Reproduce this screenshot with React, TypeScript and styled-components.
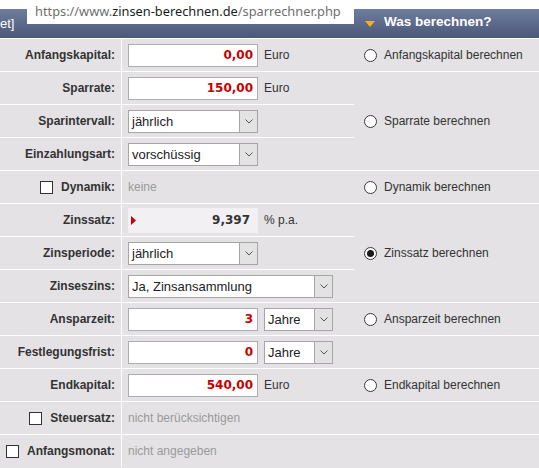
import React from "react";
import styled, { createGlobalStyle } from "styled-components";

const GlobalStyle = createGlobalStyle`
  html, body { margin: 0; padding: 0; }
  body {
    background: #e4e2e5;
    font-family: "Liberation Sans", Arial, sans-serif;
  }
`;

const Page = styled.div`
  position: relative;
  width: 539px;
`;

const TopStrip = styled.div`
  height: 9px;
  background: #fff;
`;

const Header = styled.div`
  display: grid;
  grid-template-columns: 354px 1fr;
  height: 29px;
  background: linear-gradient(#6f7d9d, #4a5779);
`;

const HeaderLeft = styled.div`
  display: flex;
  align-items: center;
  color: #fff;
  font-size: 13px;
  padding-bottom: 1px;
  overflow: hidden;
`;

const HeaderRight = styled.div`
  display: flex;
  align-items: center;
  gap: 9px;
  padding-left: 11px;
  padding-bottom: 4px;
  color: #fff;
  font-weight: bold;
  font-size: 13.5px;
`;

const Triangle = styled.svg`
  margin-top: 4px;
  flex: none;
`;

const UrlTip = styled.div`
  position: absolute;
  top: 0;
  left: 27px;
  width: 327px;
  height: 24px;
  box-sizing: border-box;
  padding-left: 8px;
  background: #fff;
  font-family: "Noto Sans", "Open Sans", sans-serif;
  font-size: 12.8px;
  line-height: 22px;
  color: #6f6f6f;
  white-space: nowrap;
  overflow: hidden;
`;

const Domain = styled.span`
  color: #1c1c1c;
`;

const Grid = styled.div`
  display: grid;
  grid-template-columns: 122px 232px 185px;
  grid-auto-rows: 33px;
`;

const LabelCell = styled.div`
  box-sizing: border-box;
  border-top: 1px solid #fff;
  border-right: 1px solid #fff;
  display: flex;
  justify-content: flex-end;
  align-items: center;
  gap: 8px;
  padding-right: 6px;
  font-weight: bold;
  font-size: 12px;
  color: #333;
  white-space: nowrap;
`;

const FieldCell = styled.div`
  box-sizing: border-box;
  border-top: 1px solid #fff;
  display: flex;
  align-items: center;
  gap: 6px;
  padding-left: 6px;
  font-size: 12px;
  color: #333;
  white-space: nowrap;
`;

const ChoiceCell = styled.div<{ $span?: number }>`
  box-sizing: border-box;
  border-top: 1px solid #fff;
  grid-row: span ${(p) => p.$span ?? 1};
  display: flex;
  align-items: center;
  gap: 7px;
  padding-left: 10px;
  font-size: 12px;
  color: #333;
  white-space: nowrap;
`;

const AmountInput = styled.input`
  width: 130px;
  height: 23px;
  box-sizing: border-box;
  margin: 0;
  border: 1px solid #abadb3;
  background: #fff;
  padding: 0 4px 0 0;
  text-align: right;
  font-family: "DejaVu Sans", Verdana, sans-serif;
  font-weight: bold;
  font-size: 12px;
  color: #c80000;
  outline: none;
`;

const SelectBox = styled.div<{ $w: number }>`
  width: ${(p) => p.$w}px;
  height: 23px;
  box-sizing: border-box;
  border: 1px solid #a6a6a6;
  background: #fff;
  display: flex;
`;

const SelectText = styled.div`
  flex: 1;
  display: flex;
  align-items: center;
  padding-left: 3px;
  font-size: 13px;
  color: #222;
`;

const SelectArrow = styled.div`
  width: 17px;
  flex: none;
  background: #e3e3e3;
  border-left: 1px solid #a6a6a6;
  display: flex;
  align-items: center;
  justify-content: center;
`;

const RateBox = styled.div`
  width: 130px;
  height: 25px;
  box-sizing: border-box;
  background: #f2f0f3;
  display: flex;
  align-items: center;
  justify-content: space-between;
  padding: 0 8px 0 3px;
`;

const RateValue = styled.span`
  font-family: "DejaVu Sans", Verdana, sans-serif;
  font-weight: bold;
  font-size: 12px;
  color: #333;
`;

const Checkbox = styled.span`
  width: 13px;
  height: 13px;
  box-sizing: border-box;
  border: 1px solid #333;
  background: #fff;
  flex: none;
`;

const Radio = styled.span<{ $checked?: boolean }>`
  width: 13px;
  height: 13px;
  box-sizing: border-box;
  border: 1px solid #3a3a3a;
  border-radius: 50%;
  background: #fff;
  flex: none;
  display: flex;
  align-items: center;
  justify-content: center;
  &::after {
    content: "";
    display: ${(p) => (p.$checked ? "block" : "none")};
    width: 7px;
    height: 7px;
    border-radius: 50%;
    background: #1a1a1a;
  }
`;

const Muted = styled.span`
  color: #9a9a9a;
`;

const Chevron = () => (
  <svg width="8" height="5" viewBox="0 0 8 5">
    <polyline points="0.5,0.5 4,4 7.5,0.5" fill="none" stroke="#555" strokeWidth="1" />
  </svg>
);

const Select = ({ w, value }: { w: number; value: string }) => (
  <SelectBox $w={w}>
    <SelectText>{value}</SelectText>
    <SelectArrow>
      <Chevron />
    </SelectArrow>
  </SelectBox>
);

const Choice = ({ label, checked, span }: { label?: string; checked?: boolean; span?: number }) => (
  <ChoiceCell $span={span}>
    {label && (
      <>
        <Radio $checked={checked} />
        <span>{label}</span>
      </>
    )}
  </ChoiceCell>
);

export default function App() {
  return (
    <Page>
      <GlobalStyle />
      <TopStrip />
      <Header>
        <HeaderLeft>et]</HeaderLeft>
        <HeaderRight>
          <Triangle width="10" height="6" viewBox="0 0 10 6">
            <polygon points="0,0 10,0 5,6" fill="#f5b400" />
          </Triangle>
          <span>Was berechnen?</span>
        </HeaderRight>
      </Header>
      <UrlTip>
        https://www.<Domain>zinsen-berechnen.de</Domain>/sparrechner.php
      </UrlTip>
      <Grid>
        <LabelCell>Anfangskapital:</LabelCell>
        <FieldCell>
          <AmountInput readOnly value="0,00" />
          <span>Euro</span>
        </FieldCell>
        <Choice label="Anfangskapital berechnen" />

        <LabelCell>Sparrate:</LabelCell>
        <FieldCell>
          <AmountInput readOnly value="150,00" />
          <span>Euro</span>
        </FieldCell>
        <Choice label="Sparrate berechnen" span={3} />

        <LabelCell>Sparintervall:</LabelCell>
        <FieldCell>
          <Select w={130} value="jährlich" />
        </FieldCell>

        <LabelCell>Einzahlungsart:</LabelCell>
        <FieldCell>
          <Select w={130} value="vorschüssig" />
        </FieldCell>

        <LabelCell>
          <Checkbox />
          <span>Dynamik:</span>
        </LabelCell>
        <FieldCell>
          <Muted>keine</Muted>
        </FieldCell>
        <Choice label="Dynamik berechnen" />

        <LabelCell>Zinssatz:</LabelCell>
        <FieldCell>
          <RateBox>
            <svg width="5" height="9" viewBox="0 0 5 9">
              <polygon points="0,0 5,4.5 0,9" fill="#c80000" />
            </svg>
            <RateValue>9,397</RateValue>
          </RateBox>
          <span>% p.a.</span>
        </FieldCell>
        <Choice label="Zinssatz berechnen" checked span={3} />

        <LabelCell>Zinsperiode:</LabelCell>
        <FieldCell>
          <Select w={130} value="jährlich" />
        </FieldCell>

        <LabelCell>Zinseszins:</LabelCell>
        <FieldCell>
          <Select w={205} value="Ja, Zinsansammlung" />
        </FieldCell>

        <LabelCell>Ansparzeit:</LabelCell>
        <FieldCell>
          <AmountInput readOnly value="3" />
          <Select w={69} value="Jahre" />
        </FieldCell>
        <Choice label="Ansparzeit berechnen" />

        <LabelCell>Festlegungsfrist:</LabelCell>
        <FieldCell>
          <AmountInput readOnly value="0" />
          <Select w={69} value="Jahre" />
        </FieldCell>
        <Choice />

        <LabelCell>Endkapital:</LabelCell>
        <FieldCell>
          <AmountInput readOnly value="540,00" />
          <span>Euro</span>
        </FieldCell>
        <Choice label="Endkapital berechnen" />

        <LabelCell>
          <Checkbox />
          <span>Steuersatz:</span>
        </LabelCell>
        <FieldCell>
          <Muted>nicht berücksichtigen</Muted>
        </FieldCell>
        <Choice />

        <LabelCell>
          <Checkbox />
          <span>Anfangsmonat:</span>
        </LabelCell>
        <FieldCell>
          <Muted>nicht angegeben</Muted>
        </FieldCell>
        <Choice />
      </Grid>
    </Page>
  );
}
